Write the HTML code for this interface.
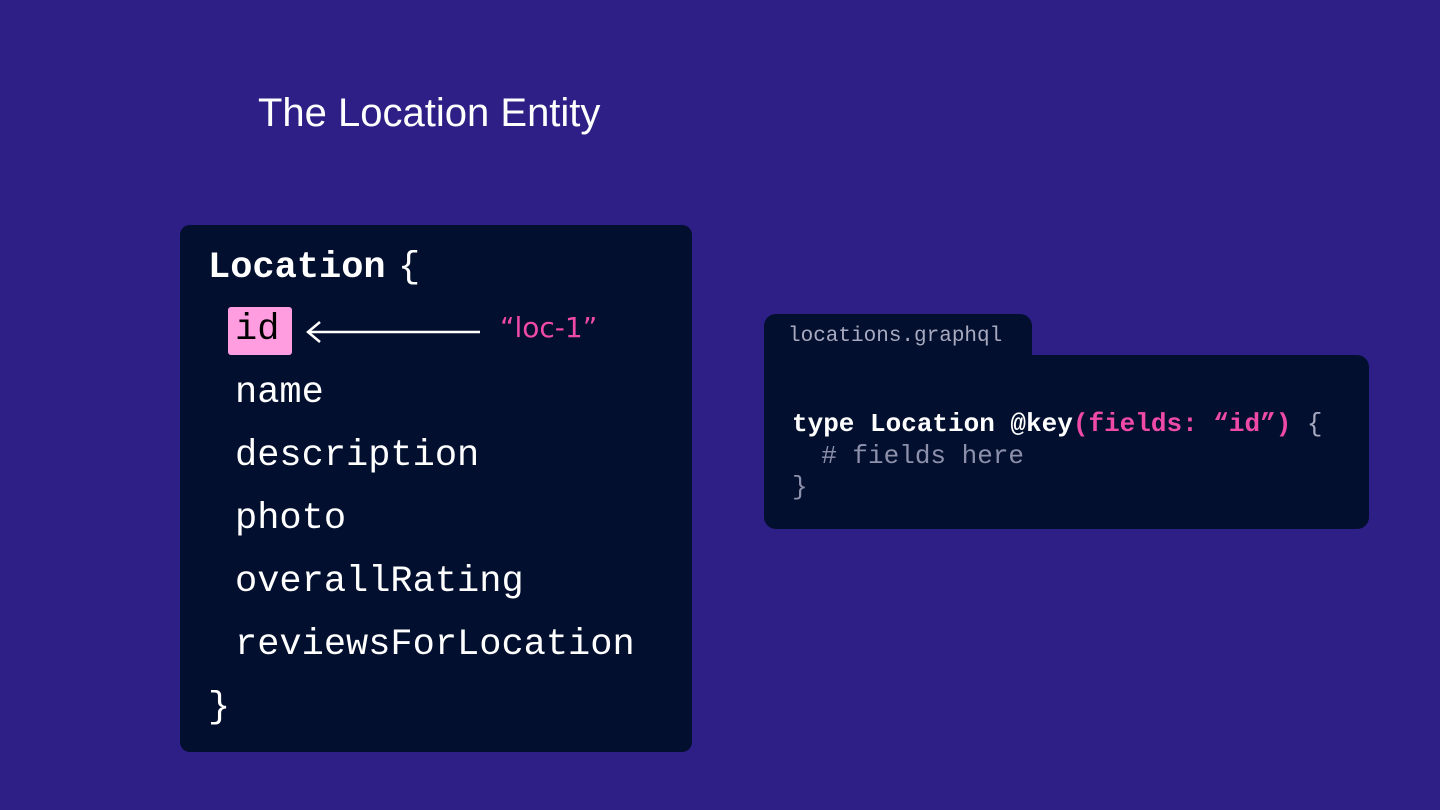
<!DOCTYPE html>
<html><head><style>
body{margin:0;width:1440px;height:810px;background:#2e1f86;position:relative;overflow:hidden;font-family:"Liberation Mono",monospace}
.t{position:absolute;left:258px;top:91px;font-family:"Liberation Sans",sans-serif;font-size:40px;color:#fff;letter-spacing:0px}
.p{position:absolute;left:180px;top:225px;width:512px;height:527px;background:#020f2e;border-radius:10px}
.l{position:absolute;color:#fff;font-size:37px;white-space:pre;line-height:1}
.id{position:absolute;left:228px;top:307px;width:64px;height:48px;background:#ff9de0;border-radius:3px}
.tab{position:absolute;left:764px;top:314px;width:268px;height:60px;background:#020f2e;border-radius:12px 12px 0 0}
.body{position:absolute;left:764px;top:355px;width:605px;height:174px;background:#020f2e;border-radius:0 12px 12px 12px}
.c{position:absolute;font-size:26px;white-space:pre;line-height:1}
</style></head><body>
<div class="t">The Location Entity</div>
<div class="p"></div>
<div class="l" style="left:208px;top:250px;font-weight:bold">Location</div>
<div class="l" style="left:398px;top:250px">{</div>
<div class="id"></div>
<div class="l" style="left:235px;top:312px;color:#000">id</div>
<svg style="position:absolute;left:300px;top:318px" width="190" height="28"><path d="M8 14H180M20 4L8 14L20 24" stroke="#fff" stroke-width="2.5" fill="none"/></svg>
<div style="position:absolute;left:500px;top:311px;font-family:'DejaVu Sans',sans-serif;font-size:28px;color:#f04aa8">“loc-1”</div>
<div class="l" style="left:235px;top:375px">name</div>
<div class="l" style="left:235px;top:438px">description</div>
<div class="l" style="left:235px;top:501px">photo</div>
<div class="l" style="left:235px;top:564px">overallRating</div>
<div class="l" style="left:235px;top:627px">reviewsForLocation</div>
<div class="l" style="left:208px;top:690px">}</div>
<div class="tab"></div>
<div class="body"></div>
<div class="c" style="left:788px;top:326px;font-size:21px;color:#a8aac0">locations.graphql</div>
<div class="c" style="left:792px;top:411px;color:#fff;font-weight:bold">type Location @key<span style="color:#f04aa8">(fields: “id”)</span><span style="color:#a8aac0;font-weight:normal"> {</span></div>
<div class="c" style="left:790px;top:443px;color:#8d90aa">  # fields here</div>
<div class="c" style="left:792px;top:474px;color:#8d90aa">}</div>
</body></html>
